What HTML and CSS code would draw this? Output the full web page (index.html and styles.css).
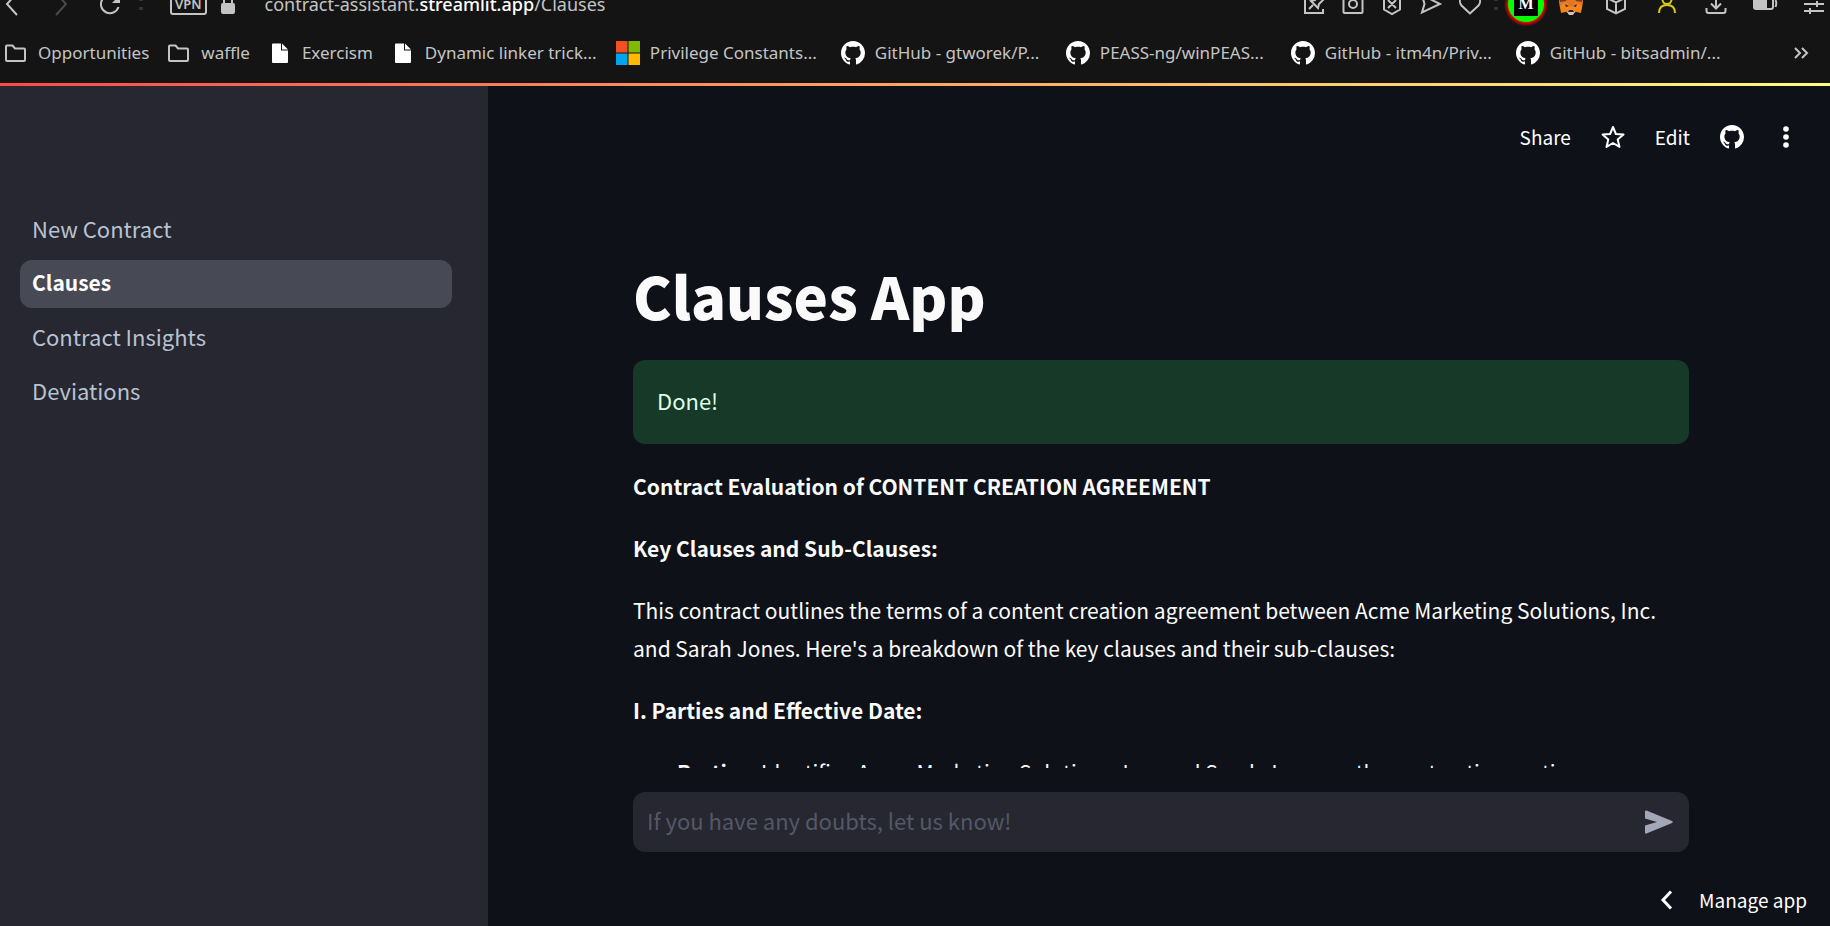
FILE: index.html
```html
<!DOCTYPE html>
<html lang="en">
<head>
<meta charset="utf-8">
<title>Clauses App</title>
<link rel="stylesheet" href="styles.css">
</head>
<body>
<svg class="defs" aria-hidden="true">
  <symbol id="github" viewBox="0 0 16 16"><path fill="currentColor" d="M8 0C3.58 0 0 3.58 0 8c0 3.54 2.29 6.53 5.47 7.59.4.07.55-.17.55-.38 0-.19-.01-.82-.01-1.49-2.01.37-2.53-.49-2.69-.94-.09-.23-.48-.94-.82-1.13-.28-.15-.68-.52-.01-.53.63-.01 1.08.58 1.23.82.72 1.21 1.87.87 2.33.66.07-.52.28-.87.51-1.07-1.78-.2-3.64-.89-3.64-3.95 0-.87.31-1.59.82-2.15-.08-.2-.36-1.02.08-2.12 0 0 .67-.21 2.2.82.64-.18 1.32-.27 2-.27s1.36.09 2 .27c1.53-1.04 2.2-.82 2.2-.82.44 1.1.16 1.92.08 2.12.51.56.82 1.27.82 2.15 0 3.07-1.87 3.75-3.65 3.95.29.25.54.73.54 1.48 0 1.07-.01 1.93-.01 2.2 0 .21.15.46.55.38A8.01 8.01 0 0 0 16 8c0-4.42-3.58-8-8-8z"/></symbol>
  <symbol id="folder" viewBox="0 0 24 24"><path fill="none" stroke="currentColor" stroke-width="2" stroke-linejoin="round" d="M3 4.500h5.500l2.500 3h9a1 1 0 0 1 1 1v10.500a1 1 0 0 1-1 1H3a1 1 0 0 1-1-1V5.500a1 1 0 0 1 1-1z"/></symbol>
  <symbol id="page" viewBox="0 0 24 24"><path fill="#fff" d="M4 3.500a1 1 0 0 1 1-1h8v7h7V21a1 1 0 0 1-1 1H5a1 1 0 0 1-1-1z"/><path fill="#fff" d="M14 2.500l6 6h-6z"/></symbol>
</svg>

<header class="browser">
  <div class="address-row">
    <div class="nav-tools">
      <button class="icon-btn" aria-label="Back"><svg viewBox="0 0 24 24"><path d="M17 1L7 12l10 11"/></svg></button>
      <button class="icon-btn faint" aria-label="Forward"><svg viewBox="0 0 24 24"><path d="M7 1l10 11L7 23"/></svg></button>
      <button class="icon-btn" aria-label="Reload"><svg viewBox="0 0 24 24"><path d="M18 5.500A9 9 0 1 0 20.500 15"/><path fill="currentColor" stroke="none" d="M22 3v8h-8z"/></svg></button>
    </div>
    <span class="dots"></span>
    <span class="vpn">VPN</span>
    <svg class="lock" viewBox="0 0 24 24"><path fill="none" stroke="#c4c4c4" stroke-width="2" d="M8 12V7a4 4 0 0 1 8 0v5"/><rect x="5" y="11" width="14" height="11" rx="2" fill="#c4c4c4"/></svg>
    <div class="url">contract-assistant.<b>streamlit.app</b>/Clauses</div>
    <div class="page-tools">
      <button class="icon-btn" aria-label="Pin page"><svg viewBox="0 0 24 24"><path d="M12 2H3v19h18v-4M7 17l4-4M9 9l7 7 1-4 4-4-4-4-4 4z"/></svg></button>
      <button class="icon-btn" aria-label="Snapshot"><svg viewBox="0 0 24 24"><rect x="2.500" y="3" width="19" height="18" rx="1"/><circle cx="12" cy="12" r="4"/></svg></button>
      <button class="icon-btn" aria-label="Blocker"><svg viewBox="0 0 24 24"><path d="M12 1l8 3v13.500L12 22l-8-4.500V4zM8 8l8 8M16 8l-8 8"/></svg></button>
      <button class="icon-btn" aria-label="Send page"><svg viewBox="0 0 24 24"><path d="M3 3l18 9-18 8.500L5.500 12z"/></svg></button>
      <button class="icon-btn" aria-label="Favorite"><svg viewBox="0 0 24 24"><path d="M12 21.500L3.500 13.500C-1 8 5 0 12 6c7-6 13 2 8.500 7.500z"/></svg></button>
    </div>
    <span class="dots"></span>
    <div class="extensions">
      <button class="icon-btn" aria-label="Extension M"><svg viewBox="0 0 24 24"><defs><radialGradient id="glow"><stop offset=".8" stop-color="#f00"/><stop offset="1" stop-color="#f00" stop-opacity="0"/></radialGradient></defs><circle cx="12" cy="12.500" r="22" fill="url(#glow)" stroke="none"/><circle cx="12" cy="12" r="18" fill="#0f0" stroke="none"/><rect y="0" width="24" height="24" fill="#000" stroke="none"/><text class="letter" x="12" y="17" text-anchor="middle">M</text></svg></button>
      <button class="icon-btn" aria-label="Wallet"><svg viewBox="0 0 24 24" class="filled"><path fill="#e57625" d="M1 0l8 5h6l8-5 1 10-1 6-1 5-5-1-5 2-5-2-5 1-1-5-1-6z"/><path fill="#f6851b" d="M1 14l6-4 5 5 5-5 6 4-2 6-5-1-4 2-4-2-5 1z"/><path fill="#763e1a" d="M1 0l8 5-2 4-6 1zM23 0l-8 5 2 4 6 1z"/><path fill="#233447" d="M6 12l4 2-3 1zM18 12l-4 2 3 1z"/><path fill="#d7c1b3" d="M8 20l2-2h4l2 2-2 3h-4z"/><path fill="#222" d="M10 18h4l1 2H9z"/></svg></button>
      <button class="icon-btn" aria-label="Extensions"><svg viewBox="0 0 24 24"><path d="M12 1l9 4.500v11.500l-9 4.500-9-4.500V5.500zM3 6l9 4.500L21 6M12 10.500V21"/></svg></button>
    </div>
    <div class="window-tools">
      <button class="icon-btn yellow" aria-label="Profile"><svg viewBox="0 0 24 24"><circle cx="12" cy="7.500" r="4.500"/><path d="M4 21c0-5 3-8 8-8s8 3 8 8"/></svg></button>
      <button class="icon-btn" aria-label="Downloads"><svg viewBox="0 0 24 24"><path d="M12 2v14M7 11.500l5 5 5-5M2.500 16v3q0 2 2 2h15q2 0 2-2v-3"/></svg></button>
      <button class="icon-btn" aria-label="Battery"><svg viewBox="0 0 24 24"><rect x="1" y="4" width="19" height="13" rx="2"/><path fill="currentColor" stroke="none" d="M1 5h13v12H1z"/><path d="M22.500 8q1.500 3 0 7"/></svg></button>
      <button class="icon-btn" aria-label="Settings"><svg viewBox="0 0 24 24"><path d="M2 5h20M2 12h20M2 19h20M15 9v6M8 16v6M8 2v6"/></svg></button>
    </div>
  </div>

  <nav class="bookmarks" aria-label="Bookmarks">
    <a class="bookmark" href="#"><svg><use href="#folder"/></svg>Opportunities</a>
    <a class="bookmark" href="#"><svg><use href="#folder"/></svg>waffle</a>
    <a class="bookmark" href="#"><svg><use href="#page"/></svg>Exercism</a>
    <a class="bookmark long" href="#"><svg><use href="#page"/></svg>Dynamic linker trick...</a>
    <a class="bookmark long" href="#"><svg viewBox="0 0 24 24"><path fill="#f25022" d="M0 0h11.500v11.500H0z"/><path fill="#7fba00" d="M12.500 0H24v11.500H12.500z"/><path fill="#00a4ef" d="M0 12.500h11.500V24H0z"/><path fill="#ffb900" d="M12.500 12.500H24V24H12.500z"/></svg>Privilege Constants...</a>
    <a class="bookmark long" href="#"><svg class="mark"><use href="#github"/></svg>GitHub - gtworek/P...</a>
    <a class="bookmark long" href="#"><svg class="mark"><use href="#github"/></svg>PEASS-ng/winPEAS...</a>
    <a class="bookmark long" href="#"><svg class="mark"><use href="#github"/></svg>GitHub - itm4n/Priv...</a>
    <a class="bookmark long" href="#"><svg class="mark"><use href="#github"/></svg>GitHub - bitsadmin/...</a>
    <button class="icon-btn more" aria-label="More bookmarks"><svg viewBox="0 0 24 24"><path d="M6 7l5 5-5 5M13 7l5 5-5 5"/></svg></button>
  </nav>
</header>

<div class="decoration"></div>

<div class="app">
  <aside class="sidebar">
    <nav class="pages" aria-label="Pages">
      <a href="#">New Contract</a>
      <a href="#" class="active" aria-current="page">Clauses</a>
      <a href="#">Contract Insights</a>
      <a href="#">Deviations</a>
    </nav>
  </aside>

  <main class="main">
    <div class="toolbar">
      <button>Share</button>
      <button aria-label="Star"><svg viewBox="0 0 24 24"><path fill="none" stroke="currentColor" stroke-width="2" stroke-linejoin="round" d="M12 2l2.900 7 7.600.6-5.800 4.900 1.800 7.400L12 18l-6.500 3.900 1.800-7.400L1.500 9.600 9.100 9z"/></svg></button>
      <button>Edit</button>
      <button aria-label="View source"><svg><use href="#github"/></svg></button>
      <button aria-label="Menu"><svg viewBox="0 0 24 24"><g fill="currentColor"><circle cx="12" cy="4" r="2.800"/><circle cx="12" cy="12" r="2.800"/><circle cx="12" cy="20" r="2.800"/></g></svg></button>
    </div>

    <section class="scroll">
      <div class="block">
        <h1>Clauses App</h1>
        <div class="alert" role="status">Done!</div>
        <div class="markdown">
          <p><strong>Contract Evaluation of CONTENT CREATION AGREEMENT</strong></p>
          <p><strong>Key Clauses and Sub-Clauses:</strong></p>
          <p>This contract outlines the terms of a content creation agreement between Acme Marketing Solutions, Inc. and Sarah Jones. Here's a breakdown of the key clauses and their sub-clauses:</p>
          <p><strong>I. Parties and Effective Date:</strong></p>
          <ul>
            <li><strong>Parties:</strong> Identifies Acme Marketing Solutions, Inc. and Sarah Jones as the contracting parties.</li>
          </ul>
        </div>
      </div>
    </section>

    <form class="chat block">
      <input type="text" aria-label="Message" placeholder="If you have any doubts, let us know!">
      <button type="button" aria-label="Send"><svg viewBox="0 0 28 24"><path fill="currentColor" d="M0 1.500Q0 0 1.500.500L27 11q1.500 1 0 2L1.500 23.500Q0 24 0 22.500V15.500l12-3.500L0 8.500z"/></svg></button>
    </form>

    <footer class="footer">
      <button><svg viewBox="0 0 24 24"><path fill="none" stroke="currentColor" stroke-width="3" d="M16 3.500L8 12l8 8.500"/></svg>Manage app</button>
    </footer>
  </main>
</div>
</body>
</html>
```

FILE: styles.css
```css
* { box-sizing: border-box; }

body {
  margin: 0;
  height: 100vh;
  display: flex;
  flex-direction: column;
  overflow: hidden;
  background: #0e1117;
  color: #fafafa;
  font-family: "Noto Sans CJK SC", "Noto Sans", sans-serif;
  font-size: 22px;
  line-height: 38px;
}

button {
  border: 0;
  padding: 0;
  background: none;
  color: inherit;
  font: inherit;
  display: flex;
  align-items: center;
}

a { color: inherit; text-decoration: none; }
svg { width: 24px; height: 24px; flex: none; display: block; }
.defs { position: absolute; width: 0; height: 0; }

/* Browser chrome */
.browser {
  flex: none;
  background: #141414;
  color: #c4c4c4;
  font-family: "Noto Sans", "Open Sans", sans-serif;
}

.address-row {
  height: 40px;
  margin-top: -16px;
  padding-right: 4px;
  display: flex;
  align-items: center;
}

.icon-btn svg {
  fill: none;
  stroke: currentColor;
  stroke-width: 2;
  overflow: visible;
}
.icon-btn .filled { stroke: none; }
.icon-btn .letter {
  fill: #fff;
  stroke: none;
  font: bold 16px "Liberation Serif", serif;
}
.faint { color: #4a4a4a; }
.yellow { color: #d8cc10; }

.nav-tools { display: flex; gap: 25px; }

.dots {
  width: 4px;
  margin: 0 17px;
  height: 12px;
  border: solid #333;
  border-width: 3px 0;
}

.vpn {
  height: 22px;
  margin-left: 10px;
  padding: 0 3px;
  border: 2px solid #c4c4c4;
  border-radius: 3px;
  font-size: 13px;
  font-weight: 600;
  line-height: 18px;
}

.lock { margin: 0 25px 0 9px; }
.url { font-size: 18px; line-height: 24px; flex: 1; }
.url b { color: #fff; font-weight: 500; }
.page-tools { display: flex; gap: 15px; }
.page-tools + .dots { margin: 0 16px 0 12px; }
.extensions { display: flex; gap: 21px; margin-right: 27px; }
.window-tools { display: flex; gap: 25px; }

.bookmarks {
  height: 59px;
  padding: 0 17px 2px 4px;
  display: flex;
  align-items: center;
  gap: 18px;
  font-size: 17px;
  line-height: 24px;
  white-space: nowrap;
}
.bookmark { display: flex; align-items: center; gap: 10px; }
.bookmark.long { width: 207px; }
.mark { color: #fff; }
.more { margin-left: auto; }

.decoration {
  height: 3px;
  flex: none;
  background: linear-gradient(90deg, #ff4b4b, #fffd80);
}

/* App */
.app { flex: 1; min-height: 0; display: flex; }

.sidebar {
  width: 488px;
  flex: none;
  padding: 120px 36px 0 20px;
  background: #262730;
}

.pages { display: flex; flex-direction: column; gap: 6px; color: #b8c3d2; }
.pages a { padding: 3px 12px 7px; border-radius: 12px; }
.pages .active { background: #474954; color: #fff; font-size: 21px; font-weight: 700; }

.main {
  flex: 1;
  min-width: 0;
  padding-left: 4px;
  display: flex;
  flex-direction: column;
}

.toolbar {
  height: 102px;
  flex: none;
  padding: 0 32px 1px 0;
  display: flex;
  align-items: center;
  justify-content: flex-end;
  gap: 30px;
  color: #fff;
  font-size: 19px;
}

.scroll { flex: 1; min-height: 0; overflow: hidden; }
.block { width: 100%; max-width: 1056px; margin: 0 auto; }

h1 {
  margin: 0;
  padding: 71px 0 29px;
  font-size: 58px;
  font-weight: 900;
  line-height: 72px;
}

.alert {
  padding: 21px 24px 25px;
  border-radius: 12px;
  background: #173928;
  color: #dffde9;
}

.markdown { padding-top: 23px; font-size: 21px; }
.markdown p { margin: 0 0 24px; }
.markdown strong { font-weight: 700; }
.markdown ul { margin: 0; padding: 0 0 0 44px; }

.chat {
  height: 60px;
  flex: none;
  margin-top: 24px;
  padding: 0 16px 0 14px;
  display: flex;
  align-items: center;
  border-radius: 12px;
  background: #262730;
  color: #a3a8b8;
}
.chat input {
  flex: 1;
  min-width: 0;
  height: 42px;
  padding: 0 0 4px;
  border: 0;
  outline: 0;
  background: none;
  color: #fafafa;
  font: inherit;
}
.chat input::placeholder { color: #555867; opacity: 1; }
.chat svg { width: 28px; }

.footer {
  height: 74px;
  flex: none;
  padding: 22px 23px 0 0;
  display: flex;
  justify-content: flex-end;
  align-items: center;
  color: #fff;
  font-size: 19px;
}
.footer button { gap: 20px; }
```
